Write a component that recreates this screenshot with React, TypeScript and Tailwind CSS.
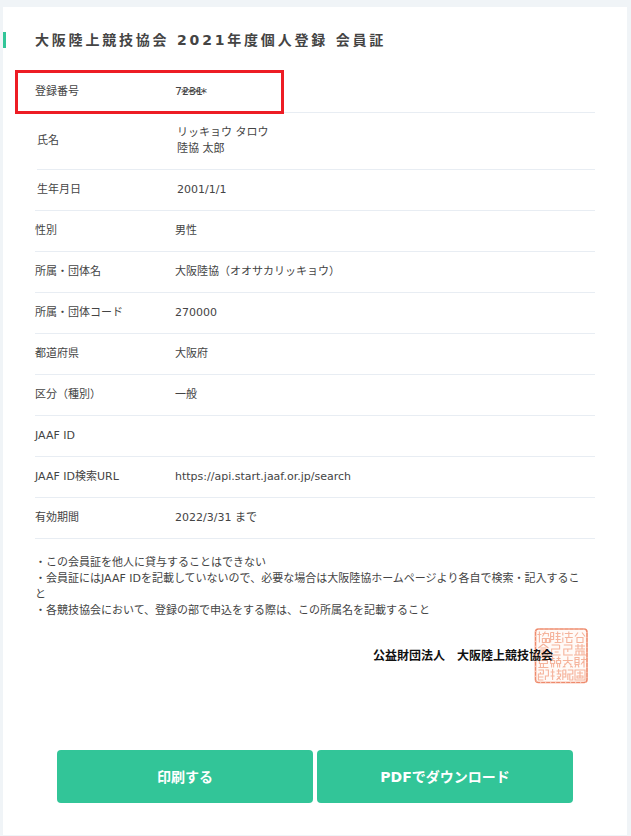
import { ReactNode } from 'react'

type Row = {
    label: string
    value: ReactNode
}

const maskedNumber = (
    <span className="relative">
        7231
        <span className="absolute left-[6px] top-0 text-[13px] leading-4">****</span>
    </span>
)

const rows: Row[] = [
    {
        label: '氏名',
        value: (
            <>
                リッキョウ タロウ
                <br />
                陸協 太郎
            </>
        )
    },
    { label: '生年月日', value: '2001/1/1' },
    { label: '性別', value: '男性' },
    { label: '所属・団体名', value: '大阪陸協（オオサカリッキョウ）' },
    { label: '所属・団体コード', value: '270000' },
    { label: '都道府県', value: '大阪府' },
    { label: '区分（種別）', value: '一般' },
    { label: 'JAAF ID', value: '' },
    { label: 'JAAF ID検索URL', value: 'https://api.start.jaaf.or.jp/search' },
    { label: '有効期間', value: '2022/3/31 まで' }
]

const notes = [
    '・この会員証を他人に貸与することはできない',
    '・会員証にはJAAF IDを記載していないので、必要な場合は大阪陸協ホームページより各自で検索・記入すること',
    '・各競技協会において、登録の部で申込をする際は、この所属名を記載すること'
]

// one entry per carved cell, right column first, each drawn in a 12x12 box
const sealCells = [
    'M4 1L1 5M8 1L11 5M3 6H9V11H3Z',
    'M1 2H11M1 5H11M4 0V5M8 0V5M2 7H10V11H2ZM5 7V11M8 7V11M0 11H12',
    'M1 1H5V8H1ZM1 3H5M1 6H5M2 8L1 11M4 8L5 11M7 3H12M10 0V11M10 4L7 8',
    'M1 1H11V11H1ZM3 4H9M6 2V9M3 7H9V9H3Z',
    'M1 1V4M1 6V11M3 2H11M7 0V6M3 6H11M5 6V11H10V8',
    'M2 1H10V5H2V11H11M6 5V8',
    'M1 4H11M6 0V5L1 11M6 5L11 11M3 7V11M9 7V11',
    'M1 1V11M1 1H4V5H1M4 5V8H1M6 1H11V5H6V11M8 5V11H11V7',
    'M1 1V11M1 1H4V5H1M4 5V8H1M6 2H11M8 0V5M6 5H11M6 8H11M8 5V11M5 11H12',
    'M2 1H10M10 1V5H2V11H11M5 8H9',
    'M1 2H5M3 0V4M1 4H5V7H1ZM2 7V11M4 7V11M7 2H11M9 0V4M7 4H11V7H7ZM8 7V11M10 7V11',
    'M1 3H5M3 0V11M1 7H5M7 2H12M9 0V5M7 5H11V7L7 11M8 7L11 11',
    'M0 3H4M2 0V11M5 2H11V5M8 0L5 5M5 7H8V11H5ZM9 7H12V11H9Z',
    'M6 0L1 4M6 0L11 4M3 4H9M2 6H10V11H2ZM2 8H10M6 6V11',
    'M1 1H11M6 1V4M2 4H10V7H2ZM6 7V11M1 11H11M3 7V11',
    'M1 1H6V5H1V11H6M8 1H11V7H8V11M3 3V5M1 8H6'
]

function Seal() {
    return (
        <svg viewBox="0 0 54 56" className="-ml-[19px] h-14 w-[54px] shrink-0" fill="none" aria-hidden="true">
            <rect x="1.5" y="1" width="51.5" height="53.5" rx="3" fill="#fffaf7" stroke="#ee8a6c" strokeWidth="1.6" />
            <rect x="1.5" y="1" width="51.5" height="53.5" rx="3" stroke="#fbd3c5" strokeWidth="1" strokeDasharray="1 4" />
            {sealCells.map((d, i) => {
                const x = 40 - Math.floor(i / 4) * 12.2
                const y = 3.5 + (i % 4) * 12.5
                return (
                    <path
                        key={i}
                        d={d}
                        transform={`translate(${x} ${y})`}
                        stroke="#f3a78c"
                        strokeWidth="1.1"
                        opacity="0.85"
                    />
                )
            })}
        </svg>
    )
}

function Field({ label, value, inset }: Row & { inset?: string }) {
    return (
        <div className={`flex items-center border-b border-[#e8edf3] py-3 ${inset ?? ''}`}>
            <dt className="w-[140px] shrink-0">{label}</dt>
            <dd className="min-w-0 flex-1">{value}</dd>
        </div>
    )
}

export default function App() {
    // the name and birthday rows sit slightly to the right of the others
    const insets = ['ml-0.5', 'pl-0.5']

    return (
        <div className="bg-[#f0f4f7] pb-px pl-[3px] pr-1 pt-[7px] font-['DejaVu_Sans','Noto_Sans_CJK_JP',sans-serif] text-[11px] leading-4 text-[#444]">
            <main className="bg-white pb-8 pt-[25px]">

                {/* TITULO */}
                <h1 className="border-l-[3px] border-[#32c598] pl-[29px] text-sm font-bold leading-4 tracking-[0.2em]">
                    大阪陸上競技協会 2021年度個人登録 会員証
                </h1>

                <div className="px-8">

                    {/* DATOS */}
                    <dl className="pt-6">
                        <div className="relative">
                            <Field label="登録番号" value={maskedNumber} />
                            <div className="pointer-events-none absolute -left-5 -top-0.5 h-11 w-[269px] border-[3px] border-[#ed1c24]" />
                        </div>
                        {rows.map((row, i) => (
                            <Field key={row.label} label={row.label} value={row.value} inset={insets[i]} />
                        ))}
                    </dl>

                    {/* NOTAS */}
                    <div className="pr-2 pt-4">
                        {notes.map((note) => (
                            <p key={note}>{note}</p>
                        ))}
                    </div>

                    {/* FIRMA */}
                    <div className="mt-[9px] flex items-center justify-end pr-[7px] text-xs font-bold text-[#111]">
                        <p className="z-10 flex gap-3">
                            <span>公益財団法人</span>
                            <span>大阪陸上競技協会</span>
                        </p>
                        <Seal />
                    </div>
                </div>

                {/* BOTONES */}
                <div className="mt-[66px] flex justify-center gap-1 px-[54px] text-sm font-bold text-white">
                    <button type="button" className="h-[53px] flex-1 rounded bg-[#32c598]">
                        印刷する
                    </button>
                    <button type="button" className="h-[53px] flex-1 rounded bg-[#32c598]">
                        PDFでダウンロード
                    </button>
                </div>
            </main>
        </div>
    )
}
